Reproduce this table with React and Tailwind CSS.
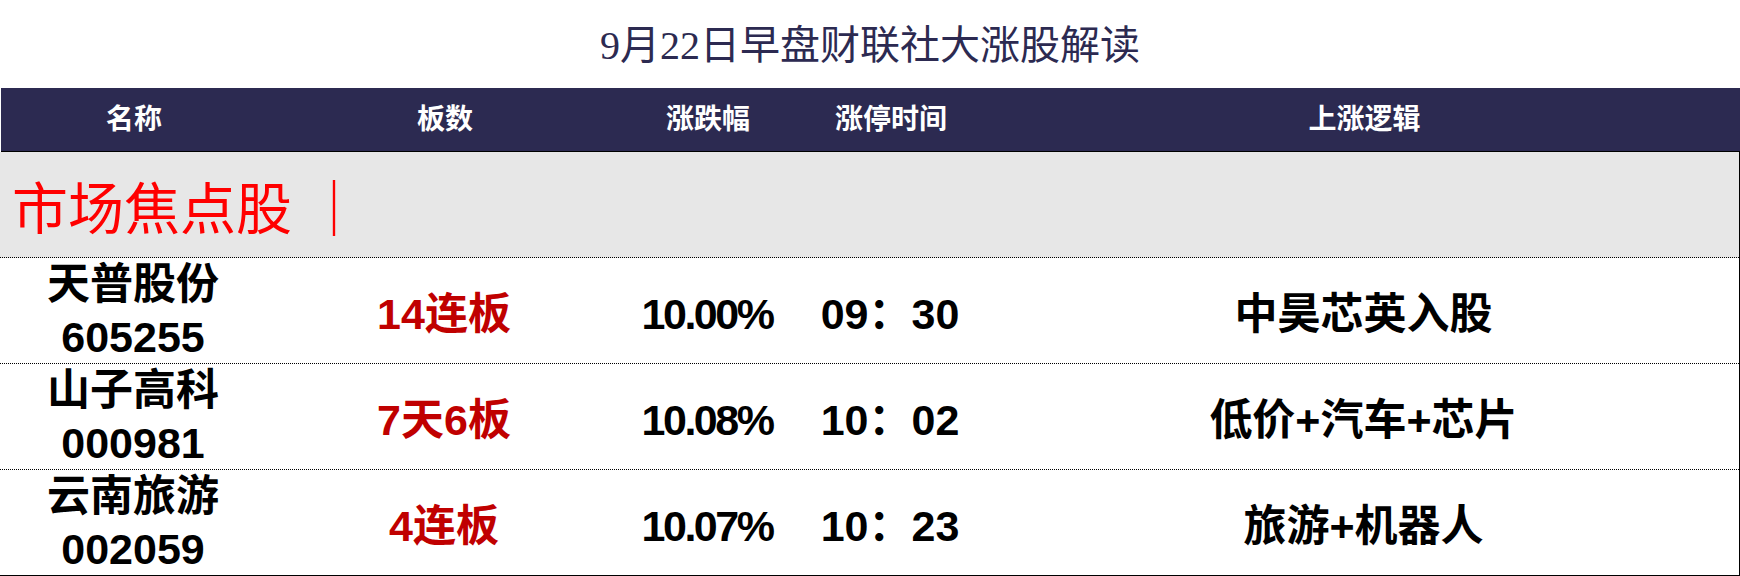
const rows = [
  { name: "天普股份", code: "605255", boards: "14连板", pct: "10.00%", time: "09：30", logic: "中昊芯英入股" },
  { name: "山子高科", code: "000981", boards: "7天6板", pct: "10.08%", time: "10：02", logic: "低价+汽车+芯片" },
  { name: "云南旅游", code: "002059", boards: "4连板", pct: "10.07%", time: "10：23", logic: "旅游+机器人" },
]

const cols = "grid grid-cols-[266px_356px_170px_196px_1fr]"
const sans = "font-['Liberation_Sans','Noto_Sans_CJK_SC',sans-serif]"

export default function App() {
  return (
    <div className="w-[1740px] h-[576px] bg-white overflow-hidden">
      <div className="h-[88px] flex items-center justify-center pt-[4px]">
        <h1 className="text-[40px] leading-none text-[#2c2a51] font-['Liberation_Serif','Noto_Sans_CJK_SC',serif]">
          9月22日早盘财联社大涨股解读
        </h1>
      </div>

      <div className={`${cols} ${sans} h-[63px] ml-px bg-[#2c2a51] text-white font-bold text-[28px] border-b border-black box-content`}>
        <div className="flex items-center justify-center">名称</div>
        <div className="flex items-center justify-center">板数</div>
        <div className="flex items-center justify-center">涨跌幅</div>
        <div className="flex items-center justify-center">涨停时间</div>
        <div className="flex items-center justify-center">上涨逻辑</div>
      </div>

      <div className="border-r border-black">
        <div className="h-[106px] bg-[#e7e7e7] border-b border-dotted border-black flex items-center pl-[12px] pt-[10px]">
          <span className="text-[56px] leading-none text-[#ff0000] font-['Liberation_Serif','Noto_Sans_CJK_SC',serif] whitespace-pre">
            市场焦点股 ｜
          </span>
        </div>

        {rows.map((r, i) => (
          <div
            key={r.code}
            className={`${cols} ${sans} h-[106px] text-[43px] font-bold text-black border-b ${i === rows.length - 1 ? "border-solid" : "border-dotted"} border-black`}
          >
            <div className="flex flex-col items-center justify-center leading-[53px]">
              <span>{r.name}</span>
              <span>{r.code}</span>
            </div>
            <div className="flex items-center justify-center text-[#c00000] pt-[6px]">{r.boards}</div>
            <div className="flex items-center justify-center tracking-[-2.5px] pt-[6px]">{r.pct}</div>
            <div className="flex items-center justify-center pt-[6px]">{r.time}</div>
            <div className="flex items-center justify-center pt-[6px]">{r.logic}</div>
          </div>
        ))}
      </div>
    </div>
  )
}
